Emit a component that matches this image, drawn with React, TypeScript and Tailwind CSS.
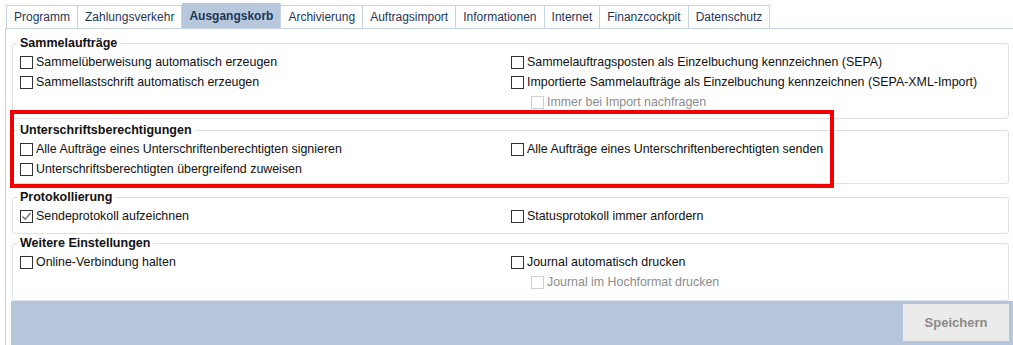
import React from "react";

const tabs = ["Programm", "Zahlungsverkehr", "Ausgangskorb", "Archivierung", "Auftragsimport", "Informationen", "Internet", "Finanzcockpit", "Datenschutz"];

function Box({ checked, disabled }: { checked?: boolean; disabled?: boolean }) {
    return (
        <span className={"w-[13px] h-[13px] shrink-0 bg-white border flex items-center justify-center " + (disabled ? "border-[#d0d0d0]" : "border-[#333333]")}>
            {checked && (
                <svg width="11" height="11" viewBox="0 0 11 11">
                    <path d="M1.5 5.5 L4.2 8.3 L9.5 2" fill="none" stroke="#6b6b6b" strokeWidth="1.3" />
                </svg>
            )}
        </span>
    );
}

function Check({ label, checked, disabled, indent }: { label: string; checked?: boolean; disabled?: boolean; indent?: boolean }) {
    return (
        <div className={"h-[20px] flex items-center gap-[3px] " + (indent ? "pl-[20px]" : "")}>
            <Box checked={checked} disabled={disabled} />
            <span className={"whitespace-nowrap " + (disabled ? "text-[#8c8c8c]" : "text-[#111111]")}>{label}</span>
        </div>
    );
}

function Group({ title, h, mt, left, right }: { title: string; h: string; mt: string; left: React.ReactNode; right: React.ReactNode }) {
    return (
        <fieldset className={"border border-[#dde2e8] rounded-[3px] pl-[7px] pr-[6px] pt-[2px] mr-[4px] " + h + " " + mt}>
            <legend className="-ml-[3px] px-[3px] font-bold text-[12.5px] leading-[14px] text-[#111111]">{title}</legend>
            <div className="grid grid-cols-[491px_1fr]">
                <div className="flex flex-col">{left}</div>
                <div className="flex flex-col">{right}</div>
            </div>
        </fieldset>
    );
}

export default function App() {
    return (
        <div className="w-[1013px] h-[345px] bg-white relative overflow-hidden text-[12.4px] font-['Liberation_Sans',Arial,sans-serif]">
            <div className="flex items-end pl-[6px] pt-[3px] h-[28px]">
                {tabs.map((t) =>
                    t === "Ausgangskorb" ? (
                        <div key={t} className="h-[25px] px-[7px] flex items-center bg-[#b8c8dc] font-bold text-[12px] text-[#1b3658] border-r border-[#c6d4e3]">{t}</div>
                    ) : (
                        <div key={t} className="h-[23px] px-[7px] flex items-center bg-white text-[12px] text-[#1f3658] border-t border-r border-[#c6d4e3] first:border-l">{t}</div>
                    )
                )}
            </div>
            <div className="ml-[5px] border-l border-t border-[#c6d4e3] h-[317px] pl-[6px] pt-[7px] flex flex-col">
                <Group
                    title="Sammelaufträge"
                    h="h-[83px]"
                    mt=""
                    left={<>
                        <Check label="Sammelüberweisung automatisch erzeugen" />
                        <Check label="Sammellastschrift automatisch erzeugen" />
                    </>}
                    right={<>
                        <Check label="Sammelauftragsposten als Einzelbuchung kennzeichnen (SEPA)" />
                        <Check label="Importierte Sammelaufträge als Einzelbuchung kennzeichnen (SEPA-XML-Import)" />
                        <Check label="Immer bei Import nachfragen" disabled indent />
                    </>}
                />
                <Group
                    title="Unterschriftsberechtigungen"
                    h="h-[61px]"
                    mt="mt-[4px]"
                    left={<>
                        <Check label="Alle Aufträge eines Unterschriftenberechtigten signieren" />
                        <Check label="Unterschriftsberechtigten übergreifend zuweisen" />
                    </>}
                    right={<Check label="Alle Aufträge eines Unterschriftenberechtigten senden" />}
                />
                <Group
                    title="Protokollierung"
                    h="h-[44px]"
                    mt="mt-[6px]"
                    left={<Check label="Sendeprotokoll aufzeichnen" checked />}
                    right={<Check label="Statusprotokoll immer anfordern" />}
                />
                <Group
                    title="Weitere Einstellungen"
                    h="h-[65px]"
                    mt="mt-[2px]"
                    left={<Check label="Online-Verbindung halten" />}
                    right={<>
                        <Check label="Journal automatisch drucken" />
                        <Check label="Journal im Hochformat drucken" disabled indent />
                    </>}
                />
                <div className="-ml-[1px] flex-1 bg-[#b5c5da] flex justify-end items-start pt-[3px] pr-[4px]">
                    <button className="w-[106px] h-[37px] bg-[#ebebeb] text-[#8a8a8a] font-bold text-[13px]">Speichern</button>
                </div>
            </div>
            <div className="absolute left-[10px] top-[110px] w-[824px] h-[78px] border-[4px] border-[#f00000] pointer-events-none" />
        </div>
    );
}
